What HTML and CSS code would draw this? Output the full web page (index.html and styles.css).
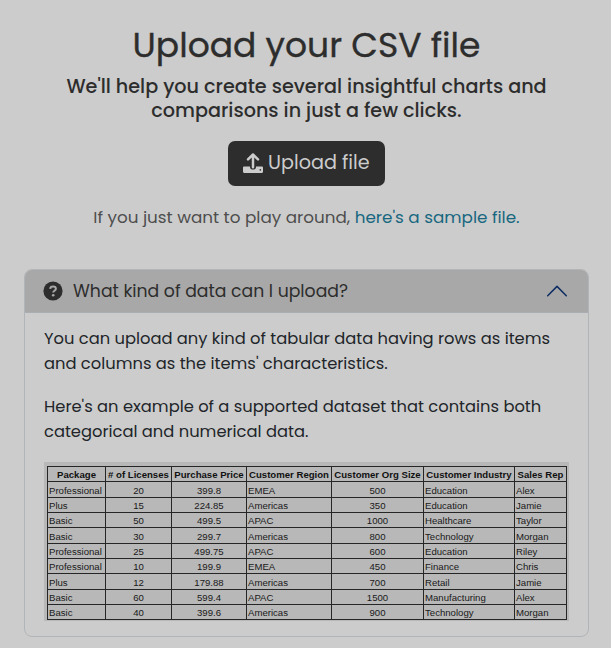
FILE: index.html
```
<!DOCTYPE html>
<html lang="en">
<head>
<meta charset="utf-8">
<title>Upload your CSV file</title>
<link rel="stylesheet" href="styles.css">
</head>
<body>
<main class="page">
  <header class="intro">
    <h1 class="title">Upload your CSV file</h1>
    <p class="subtitle">We'll help you create several insightful charts and<br>comparisons in just a few clicks.</p>
    <button class="upload" type="button">
      <svg class="upload-icon" viewBox="0 0 20 20" aria-hidden="true"><path fill="currentColor" d="M1.200 13.500H7v.4c0 3.600 6 3.600 6 0v-.4h5.800c.7 0 1.200.5 1.200 1.200v4.100c0 .7-.5 1.200-1.200 1.200H1.200C.5 20 0 19.500 0 18.800v-4.100c0-.7.5-1.200 1.200-1.200z"/><circle cx="17.300" cy="16.900" r=".8" fill="#2d2d2d"/><path d="M10 14.200V2M5 6.300l5-4.800 5 4.800" fill="none" stroke="currentColor" stroke-width="2.500" stroke-linecap="round" stroke-linejoin="round"/></svg>
      <span class="upload-label">Upload file</span>
    </button>
    <p class="hint">If you just want to play around, <a class="sample" href="#">here's a sample file.</a></p>
  </header>
  <section class="accordion">
    <h2 class="accordion-head">
      <svg class="help" viewBox="0 0 20 20" aria-hidden="true"><circle cx="10" cy="10" r="9.600" fill="#2d2d2d"/><path d="M7.200 7.900c.1-3.300 5.700-3.200 5.700-.1 0 1.900-2.700 1.900-2.700 3.700" fill="none" stroke="#a8a8a8" stroke-width="2"/><circle cx="10.200" cy="14.300" r="1.300" fill="#a8a8a8"/></svg>
      <span class="question">What kind of data can I upload?</span>
      <svg class="chevron" viewBox="0 0 20 12" aria-hidden="true"><path d="M.7 10.700 10 1.400l9.300 9.300" fill="none" stroke="#0c2d63" stroke-width="1.500" stroke-linecap="round" stroke-linejoin="round"/></svg>
    </h2>
    <div class="accordion-body">
      <p class="copy">You can upload any kind of tabular data having rows as items<br>and columns as the items' characteristics.</p>
      <p class="copy">Here's an example of a supported dataset that contains both<br>categorical and numerical data.</p>
      <div class="sheet">
        <table>
          <colgroup><col class="c1"><col class="c2"><col class="c3"><col class="c4"><col class="c5"><col class="c6"><col class="c7"></colgroup>
          <tr><th>Package</th><th># of Licenses</th><th>Purchase Price</th><th>Customer Region</th><th>Customer Org Size</th><th>Customer Industry</th><th>Sales Rep</th></tr>
          <tr><td>Professional</td><td class="n">20</td><td class="n">399.8</td><td>EMEA</td><td class="n">500</td><td>Education</td><td>Alex</td></tr>
          <tr><td>Plus</td><td class="n">15</td><td class="n">224.85</td><td>Americas</td><td class="n">350</td><td>Education</td><td>Jamie</td></tr>
          <tr><td>Basic</td><td class="n">50</td><td class="n">499.5</td><td>APAC</td><td class="n">1000</td><td>Healthcare</td><td>Taylor</td></tr>
          <tr><td>Basic</td><td class="n">30</td><td class="n">299.7</td><td>Americas</td><td class="n">800</td><td>Technology</td><td>Morgan</td></tr>
          <tr><td>Professional</td><td class="n">25</td><td class="n">499.75</td><td>APAC</td><td class="n">600</td><td>Education</td><td>Riley</td></tr>
          <tr><td>Professional</td><td class="n">10</td><td class="n">199.9</td><td>EMEA</td><td class="n">450</td><td>Finance</td><td>Chris</td></tr>
          <tr><td>Plus</td><td class="n">12</td><td class="n">179.88</td><td>Americas</td><td class="n">700</td><td>Retail</td><td>Jamie</td></tr>
          <tr><td>Basic</td><td class="n">60</td><td class="n">599.4</td><td>APAC</td><td class="n">1500</td><td>Manufacturing</td><td>Alex</td></tr>
          <tr><td>Basic</td><td class="n">40</td><td class="n">399.6</td><td>Americas</td><td class="n">900</td><td>Technology</td><td>Morgan</td></tr>
        </table>
      </div>
    </div>
  </section>
</main>
</body>
</html>
```
FILE: styles.css
```
* { box-sizing: border-box; }
body { margin: 0; background: #cccccc; color: #212529; font-family: Poppins, Inter, sans-serif; }
h1, h2, p { margin: 0; }
.page { height: 648px; padding: 24px 22px 0 24px; overflow: hidden; }
.intro { display: flex; flex-direction: column; align-items: center; height: 245px; color: #2d2d2d; white-space: nowrap; }
.title { font-size: 34.5px; font-weight: 400; line-height: 42px; -webkit-text-stroke: .35px #2d2d2d; }
.subtitle { margin-top: 9px; font-size: 19.2px; font-weight: 500; line-height: 24px; text-align: center; }
.upload { display: flex; align-items: center; gap: 5px; width: 157px; height: 45px; margin-top: 18px; padding: 0 14px 2px 15px; border: 0; border-radius: 7px; background: #2d2d2d; color: #ccc; font: 400 19.2px/28px Poppins, Inter, sans-serif; flex: none; }
.upload-icon { width: 20px; height: 20px; flex: none; }
.hint { margin-top: 18px; font-size: 16.8px; line-height: 26px; color: #4e4e4e; }
.sample { color: #176780; text-decoration: none; }
.accordion { height: 368px; border: 1px solid #b2b5b8; border-radius: 8px; white-space: nowrap; }
.accordion-head { display: flex; align-items: center; height: 43px; padding: 0 21px 0 18px; border-bottom: 1px solid #aaaeb2; border-radius: 7px 7px 0 0; background: #a8a8a8; color: #2d2d2d; font-size: 17.25px; font-weight: 400; }
.help { width: 20px; height: 20px; margin-right: 10px; }
.chevron { width: 20px; height: 12px; margin-left: auto; }
.accordion-body { padding: 13px 19px 0; }
.copy { margin-bottom: 18px; font-size: 16.32px; line-height: 25px; }
.sheet { width: 525px; height: 159px; padding: 4px 3px; background: #b8b8b8; }
table { width: 520px; table-layout: fixed; border-collapse: collapse; color: #181818; font: 9.6px/12px "Liberation Sans", Arial, sans-serif; }
tr { height: 15.35px; }
th, td { height: 15.35px; padding: 2px 1px 0; border: 1px solid #262626; text-align: left; overflow: hidden; }
th, .n { padding-right: 0; padding-left: 0; text-align: center; }
th { color: #111; }
.c1 { width: 58px; } .c2 { width: 66px; } .c3 { width: 75px; } .c4 { width: 85px; } .c5 { width: 92px; } .c6 { width: 91px; } .c7 { width: 52px; }
```
